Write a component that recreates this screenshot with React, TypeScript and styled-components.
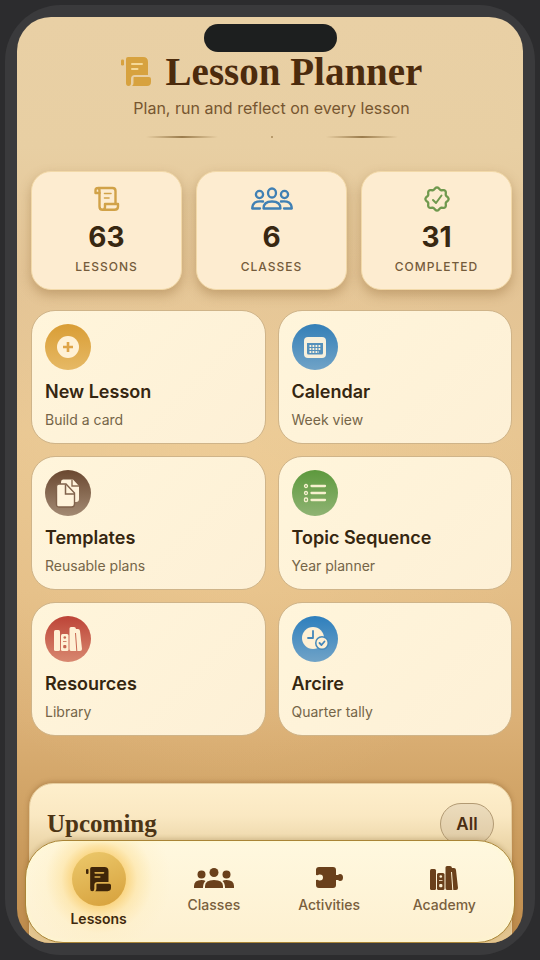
import React from "react";
import styled, { createGlobalStyle } from "styled-components";

const Global = createGlobalStyle`
  * { box-sizing: border-box; }
  body {
    margin: 0;
    background: #2c2c2e;
    font-family: Inter, "Liberation Sans", sans-serif;
    color: #38270f;
  }
  button { font: inherit; color: inherit; }
  h1, h2, h3, p { margin: 0; }
`;

const Backdrop = styled.div`
  height: 100vh;
  padding: 5px;
  background: #2c2c2e;
`;

const Device = styled.div`
  height: 100%;
  padding: 12px;
  border-radius: 56px;
  background: #3a3a3c;
`;

const Screen = styled.div`
  position: relative;
  height: 100%;
  overflow: hidden;
  border-radius: 34px;
  background:
    radial-gradient(circle at 40% 52%, rgba(255, 226, 170, 0.25), transparent 55%),
    linear-gradient(180deg, #e9d0a5 0%, #e8cfa3 14%, #e3c496 28%, #e8c692 45%, #e4be87 62%, #dbb076 76%, #cfa163 86%, #bd8a4b 100%);
`;

const Notch = styled.div`
  position: absolute;
  top: 7px;
  left: calc(50% - 66px);
  width: 133px;
  height: 28px;
  border-radius: 14px;
  background: #1d1f1f;
`;

const Content = styled.main`
  display: flex;
  flex-direction: column;
  padding: 33px 11px 0 14px;
`;

const Header = styled.header`
  display: flex;
  flex-direction: column;
  align-items: center;
  margin-bottom: 33px;
`;

const TitleRow = styled.div`
  display: flex;
  align-items: center;
  gap: 15px;
`;

const Title = styled.h1`
  font: 700 39px/44px "Liberation Serif", serif;
  color: #4c2b0d;
`;

const Tagline = styled.p`
  margin-top: 2px;
  font-size: 16px;
  line-height: 24px;
  color: #775630;
`;

const Divider = styled.div`
  display: flex;
  align-items: center;
  justify-content: space-between;
  width: 252px;
  margin-top: 16px;
`;

const Rule = styled.span`
  width: 72px;
  height: 2px;
  background: linear-gradient(90deg, transparent, #9b7c4c 50%, transparent);
`;

const Dot = styled.span`
  width: 2px;
  height: 2px;
  border-radius: 1px;
  background: #a98a5a;
`;

const Stats = styled.section`
  display: grid;
  grid-template-columns: repeat(3, 1fr);
  gap: 14px;
  margin-bottom: 20px;
`;

const StatCard = styled.div`
  display: flex;
  flex-direction: column;
  align-items: center;
  height: 119px;
  padding-top: 14px;
  border: 1px solid #f2d9a9;
  border-radius: 20px;
  background: #fdecd0;
  box-shadow: 0 5px 12px rgba(134, 92, 40, 0.36);
`;

const StatIcon = styled.div`
  display: flex;
  align-items: center;
  height: 26px;
`;

const StatValue = styled.strong`
  margin-top: 8px;
  font-size: 28px;
  line-height: 34px;
  font-weight: 700;
  color: #382711;
`;

const StatLabel = styled.span`
  margin-top: 4px;
  font-size: 12px;
  line-height: 18px;
  font-weight: 500;
  letter-spacing: 1px;
  color: #745b3b;
`;

const Tiles = styled.section`
  display: grid;
  grid-template-columns: repeat(2, 1fr);
  gap: 12px;
`;

const Tile = styled.button`
  display: flex;
  flex-direction: column;
  align-items: flex-start;
  justify-content: flex-start;
  height: 134px;
  padding: 13px;
  border: 1px solid #cfb489;
  border-radius: 24px;
  background: linear-gradient(135deg, #fff5db, #fdf0d6);
  text-align: left;
  cursor: pointer;
`;

const Disc = styled.span<{ $from: string; $to: string }>`
  display: flex;
  flex-shrink: 0;
  align-items: center;
  justify-content: center;
  width: 46px;
  height: 46px;
  border-radius: 50%;
  background: linear-gradient(180deg, ${(p) => p.$from}, ${(p) => p.$to});
`;

const TileTitle = styled.span`
  margin-top: 10px;
  font-size: 18px;
  line-height: 24px;
  font-weight: 600;
  color: #352610;
`;

const TileNote = styled.span`
  margin-top: 6px;
  font-size: 14px;
  line-height: 20px;
  color: #756548;
`;

const Panel = styled.section`
  display: flex;
  justify-content: space-between;
  height: 180px;
  margin: 47px 0 0 -2px;
  padding: 19px 17px 0 17px;
  border: 1px solid #e5cc9d;
  border-radius: 24px;
  background: linear-gradient(180deg, #feefcc 0%, #fae8c2 18%, #ecd6a9 34%, #e2c48e 60%);
  box-shadow: 0 -1px 5px rgba(115, 73, 25, 0.35);
`;

const PanelTitle = styled.h2`
  font: 700 25px/42px "Liberation Serif", serif;
  color: #4c3415;
`;

const AllButton = styled.button`
  width: 54px;
  height: 42px;
  padding: 0;
  border: 1px solid #b29a73;
  border-radius: 21px;
  background: linear-gradient(180deg, #ecdcbd, #dfcaa4);
  font-size: 17px;
  font-weight: 600;
  color: #4a2d12;
  cursor: pointer;
`;

const Nav = styled.nav`
  position: absolute;
  left: 8px;
  right: 8px;
  bottom: 0;
  display: grid;
  grid-template-columns: repeat(4, 1fr);
  height: 103px;
  padding: 11px 12px 0 15px;
  border: 1px solid #a98436;
  border-radius: 38px;
  background:
    radial-gradient(circle at 15% 38%, rgba(247, 196, 84, 0.7) 24px, rgba(252, 220, 140, 0.45) 38px, rgba(254, 236, 185, 0.2) 54px, transparent 72px),
    linear-gradient(180deg, #fff8df, #fdf0d0);
  box-shadow: 0 -2px 4px rgba(116, 82, 25, 0.2), inset 0 0 5px #fff9cf;
`;

const NavItem = styled.a<{ $active?: boolean }>`
  display: flex;
  flex-direction: column;
  align-items: center;
  padding-top: ${(p) => (p.$active ? "0" : "11px")};
  font-size: 14px;
  line-height: 20px;
  font-weight: ${(p) => (p.$active ? 600 : 500)};
  color: ${(p) => (p.$active ? "#3f280d" : "#79603d")};
  text-decoration: none;
`;

const NavMark = styled.span<{ $active?: boolean }>`
  display: flex;
  align-items: center;
  justify-content: center;
  width: 54px;
  height: ${(p) => (p.$active ? "54px" : "29px")};
  margin-bottom: 3px;
  border-radius: 50%;
  color: #6a401b;
  background: ${(p) => (p.$active ? "linear-gradient(160deg, #ecc96c, #d6a03b)" : "none")};
`;

function ScrollFilled({ size, color, lines }: { size: number; color: string; lines: string }) {
  return (
    <svg width={size} height={size} viewBox="0 0 30 30" aria-hidden="true">
      <path fill={color} d="M7 0H22Q27 0 27 5V18H14Q10 18 10 22V26Q10 29 7.500 29Q5 29 5 26V2Q5 0 7 0Z" />
      <rect x="0" y="2.500" width="3" height="6" rx="1.200" fill={color} />
      <path fill={color} d="M13 20H28Q30 20 30 22V25Q30 29 26 29H11Q12.500 28 12.500 26V21Q12.500 20 13 20Z" />
      <path d="M11 7H21M11 12H16.500" stroke={lines} strokeWidth="2" strokeLinecap="round" />
    </svg>
  );
}

function ScrollOutline() {
  return (
    <svg width="26" height="26" viewBox="0 0 26 26" fill="none" stroke="#d1a248" strokeWidth="2.400" strokeLinejoin="round" strokeLinecap="round" aria-hidden="true">
      <path d="M5.500 7V20.500Q5.500 23.800 8.500 23.800H20.500Q24 23.800 24 20.500V18H11V21Q11 23.800 8 23.800" />
      <path d="M5.500 7H1.500V4.500Q1.500 2 4 2H18.500Q21.500 2 21.500 5V17M4 2Q5.500 2.500 5.500 5V7" />
      <path d="M10.500 7.500H17M10.500 12H15" strokeWidth="1.600" />
    </svg>
  );
}

function PeopleOutline() {
  return (
    <svg width="42" height="24" viewBox="0 0 42 24" fill="none" stroke="#4080b4" strokeWidth="2.300" strokeLinejoin="round" strokeLinecap="round" aria-hidden="true">
      <ellipse cx="21" cy="6" rx="4" ry="4.500" />
      <circle cx="8.500" cy="7.500" r="3.600" />
      <circle cx="33.500" cy="7.500" r="3.600" />
      <path d="M12.500 21.500Q12.500 14.500 21 14.500T29.500 21.500Z" />
      <path d="M12 14.500Q1.500 13 1.200 21.500H9M30 14.500Q40.500 13 40.800 21.500H33" />
    </svg>
  );
}

function PeopleFilled() {
  return (
    <svg width="42" height="24" viewBox="0 0 42 24" fill="currentColor" aria-hidden="true">
      <circle cx="21" cy="6.500" r="4.500" />
      <circle cx="8.500" cy="8.500" r="4" />
      <circle cx="33.500" cy="8.500" r="4" />
      <path d="M12 22V20Q12 14 21 14T30 20V22Z" />
      <path d="M1 22V20Q1 14 8.500 14Q11.500 14 12.500 15Q10 17 10 22ZM41 22V20Q41 14 33.500 14Q30.500 14 29.500 15Q32 17 32 22Z" />
    </svg>
  );
}

const sealPath =
  Array.from({ length: 96 }, (_, i) => {
    const angle = (i / 96) * Math.PI * 2;
    const radius = 10.6 + Math.cos(angle * 8);
    return `${i ? "L" : "M"}${(13 + radius * Math.sin(angle)).toFixed(2)} ${(13 - radius * Math.cos(angle)).toFixed(2)}`;
  }).join("") + "Z";

function Seal() {
  return (
    <svg width="26" height="26" viewBox="0 0 26 26" fill="none" stroke="#70994e" strokeLinejoin="round" strokeLinecap="round" aria-hidden="true">
      <path d={sealPath} strokeWidth="2.300" />
      <path d="M9 14L12 17L17.500 9.500" strokeWidth="2" />
    </svg>
  );
}

function Plus() {
  return (
    <svg width="24" height="24" viewBox="0 0 24 24" aria-hidden="true">
      <circle cx="12" cy="12" r="11" fill="#fff1d5" />
      <path d="M12 7V17M7 12H17" stroke="#dfa447" strokeWidth="2.600" />
    </svg>
  );
}

function CalendarIcon() {
  return (
    <svg width="24" height="24" viewBox="0 0 24 24" aria-hidden="true">
      <rect x="1" y="2" width="22" height="21" rx="4" fill="#f7f0dc" />
      <path d="M4 8H20V18Q20 19.500 18.500 19.500H5.500Q4 19.500 4 18Z" fill="#5490bb" />
      <path d="M6.500 11H18.500M6.500 14H18.500M6.500 17H16" stroke="#f7f0dc" strokeWidth="1.800" strokeDasharray="1.800 1.200" />
    </svg>
  );
}

function Documents() {
  return (
    <svg width="26" height="30" viewBox="0 0 26 30" aria-hidden="true">
      <path d="M8 1.500H18L24 8V21Q24 24 21 24H8Q6 24 6 22V4Q6 1.500 8 1.500Z" fill="#fff3db" />
      <path d="M17 1.500V8H24" fill="none" stroke="#8a6c51" strokeWidth="1.400" />
      <path d="M4 6H11L19.500 15V26Q19.500 29 16.500 29H4Q1.500 29 1.500 26.500V8.500Q1.500 6 4 6Z" fill="#fff3db" stroke="#80624b" strokeWidth="1.400" />
      <path d="M10.500 6.500V16H19" fill="none" stroke="#80624b" strokeWidth="1.500" />
    </svg>
  );
}

function ListIcon() {
  return (
    <svg width="24" height="22" viewBox="0 0 24 22" fill="none" stroke="#f7f0cf" strokeLinecap="round" aria-hidden="true">
      <path d="M8.500 4H22M8.500 11H22M8.500 18H22" strokeWidth="2.300" />
      <circle cx="3" cy="4" r="1.500" strokeWidth="1.300" />
      <circle cx="3" cy="11" r="1.500" strokeWidth="1.300" />
      <rect x="1.500" y="16" width="3" height="3.500" rx="1" strokeWidth="1.300" />
    </svg>
  );
}

function Books({ color, hole }: { color: string; hole: string }) {
  return (
    <svg width="28" height="26" viewBox="0 0 28 26" aria-hidden="true">
      <g fill={color}>
        <rect x="0" y="4" width="6" height="21" rx="1.500" />
        <rect x="7" y="8" width="7.500" height="17" rx="1.500" />
        <path d="M17 1H20Q21.800 1 22 3H24Q25.800 3 26 5L28 23Q28 25 26 25H17Q15.500 25 15.500 23V2.500Q15.500 1 17 1Z" />
      </g>
      <path d="M21.500 7L22.800 25" stroke={hole} strokeWidth="1" />
      <circle cx="10.800" cy="11.500" r="1.300" fill={hole} />
      <rect x="9.200" y="19" width="3.200" height="3.200" rx="1" fill={hole} />
      <path d="M9 15.500H12.500" stroke={hole} strokeWidth="0.800" />
    </svg>
  );
}

function ClockCheck() {
  return (
    <svg width="28" height="26" viewBox="0 0 28 26" fill="none" strokeLinecap="round" strokeLinejoin="round" aria-hidden="true">
      <circle cx="12" cy="12" r="11" fill="#fff0d4" />
      <path d="M12 5V12H7" stroke="#4386ba" strokeWidth="1.800" />
      <circle cx="21" cy="17" r="7" fill="#4589bb" />
      <circle cx="21" cy="17" r="5.500" fill="#fff0d4" />
      <path d="M18.500 17L20.500 19L23.500 15.500" stroke="#4386ba" strokeWidth="1.800" />
    </svg>
  );
}

function Puzzle() {
  return (
    <svg width="28" height="24" viewBox="0 0 28 24" fill="currentColor" aria-hidden="true">
      <path d="M4 1H18Q21 1 21 4V9H23Q24 8 25 8Q28 8 28 11.500T25 15Q24 15 23 14H21V19Q21 22 18 22H4Q1 22 1 19V14Q3 13.500 4 14.500Q8 15 8 11.500T4 8.500Q3 9.500 1 9V4Q1 1 4 1Z" />
    </svg>
  );
}

const stats = [
  { icon: <ScrollOutline />, value: 63, label: "LESSONS" },
  { icon: <PeopleOutline />, value: 6, label: "CLASSES" },
  { icon: <Seal />, value: 31, label: "COMPLETED" },
];

const tiles = [
  { title: "New Lesson", note: "Build a card", icon: <Plus />, from: "#d99d35", to: "#e6b965" },
  { title: "Calendar", note: "Week view", icon: <CalendarIcon />, from: "#347fb7", to: "#70a3c7" },
  { title: "Templates", note: "Reusable plans", icon: <Documents />, from: "#6a4830", to: "#a38a73" },
  { title: "Topic Sequence", note: "Year planner", icon: <ListIcon />, from: "#5d993d", to: "#8fb373" },
  { title: "Resources", note: "Library", icon: <Books color="#fff0d4" hole="#c76751" />, from: "#bd4437", to: "#d88870" },
  { title: "Arcire", note: "Quarter tally", icon: <ClockCheck />, from: "#2e7fbd", to: "#70a3c7" },
];

const links = [
  { label: "Lessons", icon: <ScrollFilled size={25} color="#3f2509" lines="#d7aa49" />, active: true },
  { label: "Classes", icon: <PeopleFilled /> },
  { label: "Activities", icon: <Puzzle /> },
  { label: "Academy", icon: <Books color="#6a401b" hole="#fff3d5" /> },
];

export default function App() {
  return (
    <Backdrop>
      <Global />
      <Device>
        <Screen>
          <Content>
            <Header>
              <TitleRow>
                <ScrollFilled size={30} color="#d7a23f" lines="#f5d998" />
                <Title>Lesson Planner</Title>
              </TitleRow>
              <Tagline>Plan, run and reflect on every lesson</Tagline>
              <Divider>
                <Rule />
                <Dot />
                <Rule />
              </Divider>
            </Header>
            <Stats>
              {stats.map((s) => (
                <StatCard key={s.label}>
                  <StatIcon>{s.icon}</StatIcon>
                  <StatValue>{s.value}</StatValue>
                  <StatLabel>{s.label}</StatLabel>
                </StatCard>
              ))}
            </Stats>
            <Tiles>
              {tiles.map((t) => (
                <Tile key={t.title} type="button">
                  <Disc $from={t.from} $to={t.to}>{t.icon}</Disc>
                  <TileTitle>{t.title}</TileTitle>
                  <TileNote>{t.note}</TileNote>
                </Tile>
              ))}
            </Tiles>
            <Panel>
              <PanelTitle>Upcoming</PanelTitle>
              <AllButton type="button">All</AllButton>
            </Panel>
          </Content>
          <Notch />
          <Nav>
            {links.map((l) => (
              <NavItem key={l.label} href={`#${l.label.toLowerCase()}`} $active={l.active}>
                <NavMark $active={l.active}>{l.icon}</NavMark>
                {l.label}
              </NavItem>
            ))}
          </Nav>
        </Screen>
      </Device>
    </Backdrop>
  );
}
